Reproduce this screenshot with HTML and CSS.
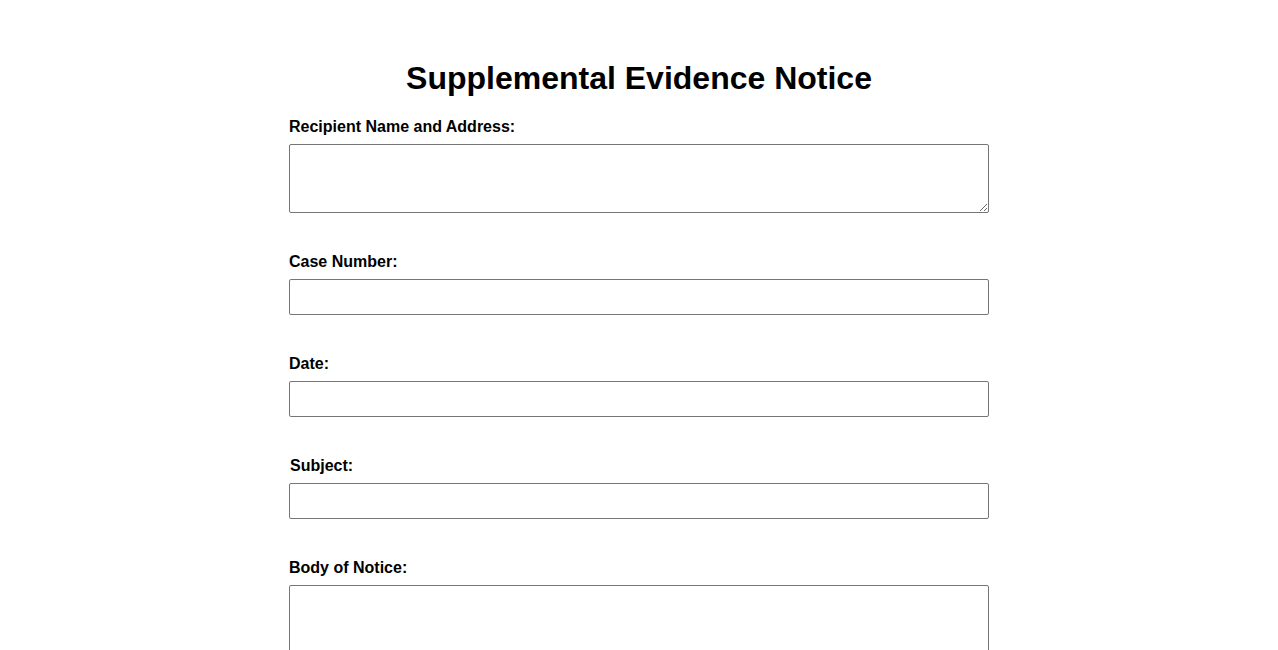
FILE: index.html
```html
<!DOCTYPE html>
<html lang="en">
<head>
<meta charset="utf-8">
<title>Supplemental Evidence Notice</title>
<link rel="stylesheet" href="styles.css">
</head>
<body>
<div class="container">
  <h1 class="title">Supplemental Evidence Notice</h1>
  <form class="form">
    <div class="group">
      <label class="label" for="recipient">Recipient Name and Address:</label>
      <textarea class="field area" id="recipient"></textarea>
    </div>
    <div class="group">
      <label class="label" for="case">Case Number:</label>
      <input class="field line" type="text" id="case">
    </div>
    <div class="group">
      <label class="label" for="date">Date:</label>
      <input class="field line" type="text" id="date">
    </div>
    <div class="group">
      <label class="label label-shift" for="subject">Subject:</label>
      <input class="field line" type="text" id="subject">
    </div>
    <div class="group">
      <label class="label" for="body">Body of Notice:</label>
      <textarea class="field area-big" id="body"></textarea>
    </div>
  </form>
</div>
</body>
</html>
```

FILE: styles.css
```css
html, body {
  margin: 0;
  padding: 0;
  background: #ffffff;
}
body {
  font-family: "Liberation Sans", Arial, sans-serif;
  color: #000000;
}
.container {
  width: 700px;
  margin: 0 auto;
  padding-top: 40px;
}
.title {
  margin: 20px 0 20px;
  font-size: 32px;
  line-height: 37px;
  font-weight: bold;
  text-align: center;
}
.form {
  display: flex;
  flex-direction: column;
  gap: 39px;
}
.group {
  display: flex;
  flex-direction: column;
}
.label {
  display: block;
  font-size: 16px;
  line-height: 18px;
  font-weight: bold;
  padding-top: 1px;
  margin-bottom: 8px;
}
.label-shift {
  margin-left: 1px;
}
.field {
  display: block;
  box-sizing: border-box;
  width: 100%;
  margin: 0;
  border: 1px solid #767676;
  border-radius: 2px;
  background: #ffffff;
  font-family: "Liberation Sans", Arial, sans-serif;
  font-size: 16px;
  padding: 8px;
}
.area {
  height: 69px;
}
.line {
  height: 36px;
}
.area-big {
  height: 150px;
}
```
